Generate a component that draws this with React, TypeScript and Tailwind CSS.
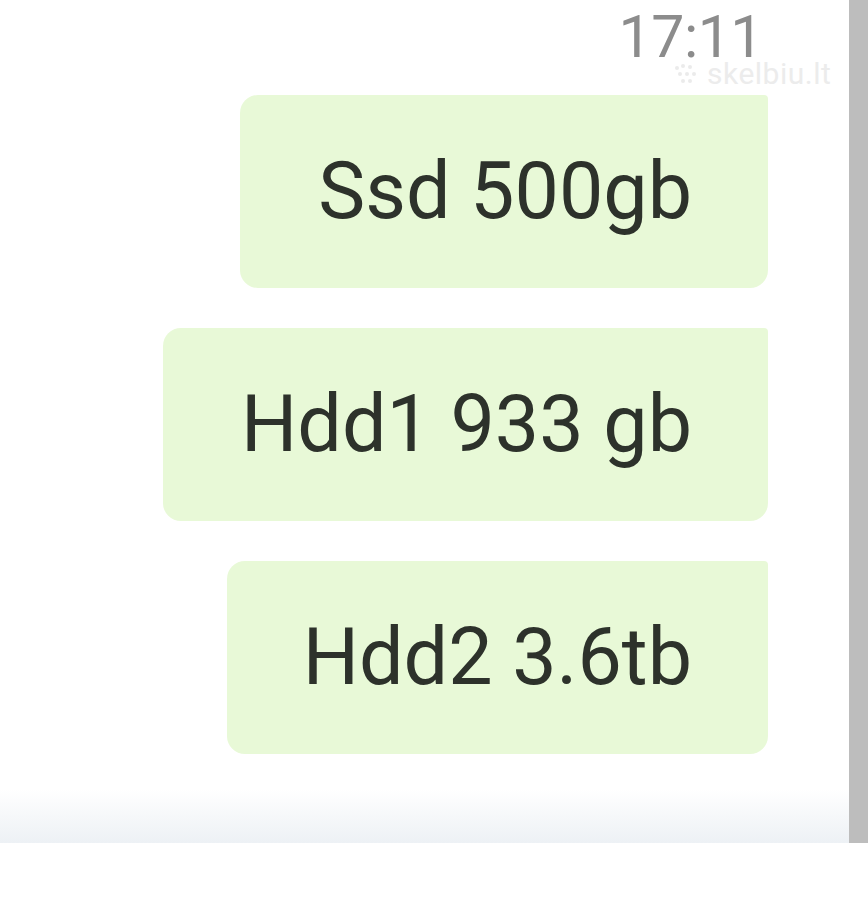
import React from "react";

const bubbles = ["Ssd 500gb", "Hdd1 933 gb", "Hdd2 3.6tb"];

export default function App() {
  return (
    <div
      className="w-[868px] h-[900px] bg-white flex items-start"
      style={{ fontFamily: "Roboto, 'Noto Sans', sans-serif" }}
    >
      <div className="relative w-[849px] h-[843px] flex flex-col">
        <div className="h-[95px] flex justify-end pr-[86px] pt-[11px]">
          <span className="text-[59px] leading-[52px] text-[#8c8c8c] tracking-[-0.5px]">17:11</span>
        </div>
        <div className="absolute left-[673px] top-[63px] h-[22px] flex items-center gap-[6px]">
          <svg width="28" height="22" viewBox="0 0 28 22">
            <g fill="#ebebeb">
              <circle cx="4" cy="5" r="2" />
              <circle cx="10" cy="3" r="2" />
              <circle cx="17" cy="4" r="2" />
              <circle cx="7" cy="11" r="2" />
              <circle cx="14" cy="11" r="2" />
              <circle cx="21" cy="11" r="2" />
              <circle cx="10" cy="18" r="2" />
              <circle cx="17" cy="18" r="2" />
            </g>
          </svg>
          <span className="text-[30px] leading-[22px] text-[#ececec] tracking-[0.5px]">skelbiu.lt</span>
        </div>
        <div className="relative flex flex-col items-end gap-[40px] pr-[81px]">
          {bubbles.map((b, i) => (
            <div
              key={b}
              className={
                "h-[193px] flex items-center pr-[76px] bg-[#e8f9d7] rounded-[18px] rounded-tr-[4px] " +
                (i === 2 ? "pl-[76px]" : "pl-[78px]")
              }
            >
              <span className="text-[79px] leading-none text-[#2d322b] whitespace-nowrap">{b}</span>
            </div>
          ))}
        </div>
        <div className="flex-1" />
        <div className="h-[54px] bg-gradient-to-b from-white to-[#edf1f5]" />
      </div>
      <div className="w-[19px] h-[843px] bg-[#bdbdbd]" />
    </div>
  );
}
